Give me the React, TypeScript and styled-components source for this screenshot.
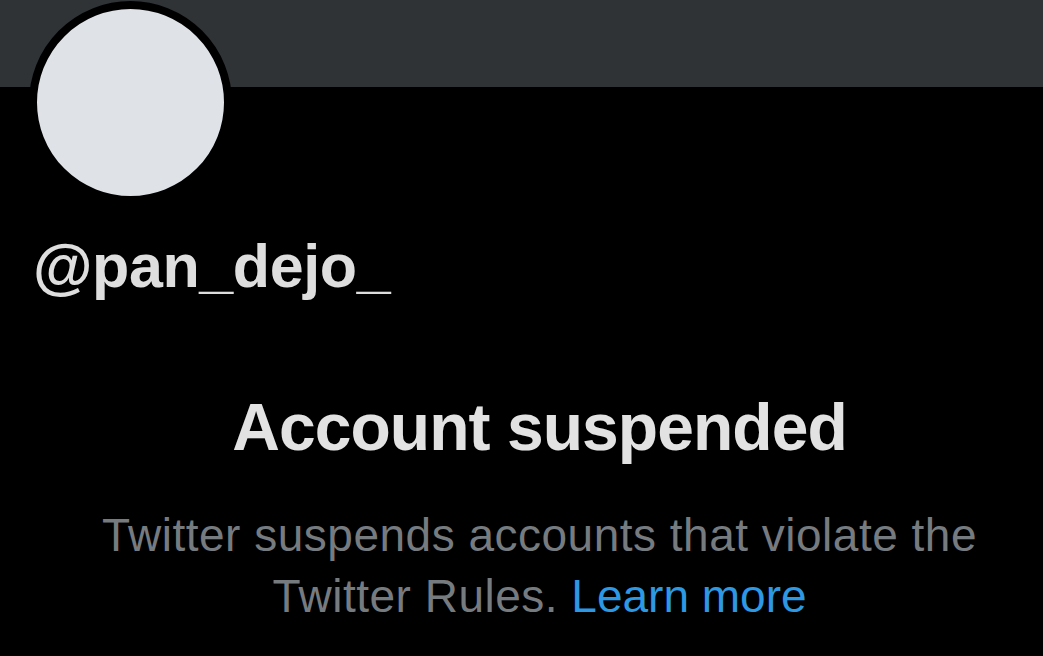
import React from "react";
import styled, { createGlobalStyle } from "styled-components";

const Global = createGlobalStyle`
  html, body { margin: 0; padding: 0; background: #000; }
  body { font-family: "Liberation Sans", Arial, sans-serif; overflow: hidden; }
`;

const Page = styled.div`
  width: 1043px;
  height: 656px;
  background: #000;
  display: flex;
  flex-direction: column;
`;

const Banner = styled.div`
  height: 87px;
  background: #2f3336;
  flex-shrink: 0;
`;

const Avatar = styled.div`
  width: 187px;
  height: 187px;
  border-radius: 50%;
  background: #dfe3e7;
  border: 8px solid #000;
  margin: -86px 0 0 29px;
  flex-shrink: 0;
`;

const Handle = styled.div`
  margin: 22px 0 0 33px;
  font-size: 61px;
  font-weight: 700;
  color: #dedede;
  line-height: 80px;
  letter-spacing: -0.4px;
`;

const Notice = styled.div`
  display: flex;
  flex-direction: column;
  align-items: center;
  padding-left: 36px;
  margin-top: 81px;
`;

const Title = styled.h1`
  margin: 0;
  font-size: 66px;
  font-weight: 700;
  color: #e2e2e2;
  line-height: 80px;
  letter-spacing: -0.95px;
`;

const Body = styled.p`
  margin: 38px 0 0;
  font-size: 46px;
  line-height: 61px;
  color: #767b80;
  text-align: center;
  letter-spacing: 0.5px;
  width: 960px;
`;

const Link = styled.a`
  color: #2d98e3;
  text-decoration: none;
  letter-spacing: 0;
`;

export default function App() {
  return (
    <Page>
      <Global />
      <Banner />
      <Avatar />
      <Handle>@pan_dejo_</Handle>
      <Notice>
        <Title>Account suspended</Title>
        <Body>
          Twitter suspends accounts that violate the
          <br />
          Twitter Rules. <Link href="#">Learn more</Link>
        </Body>
      </Notice>
    </Page>
  );
}
